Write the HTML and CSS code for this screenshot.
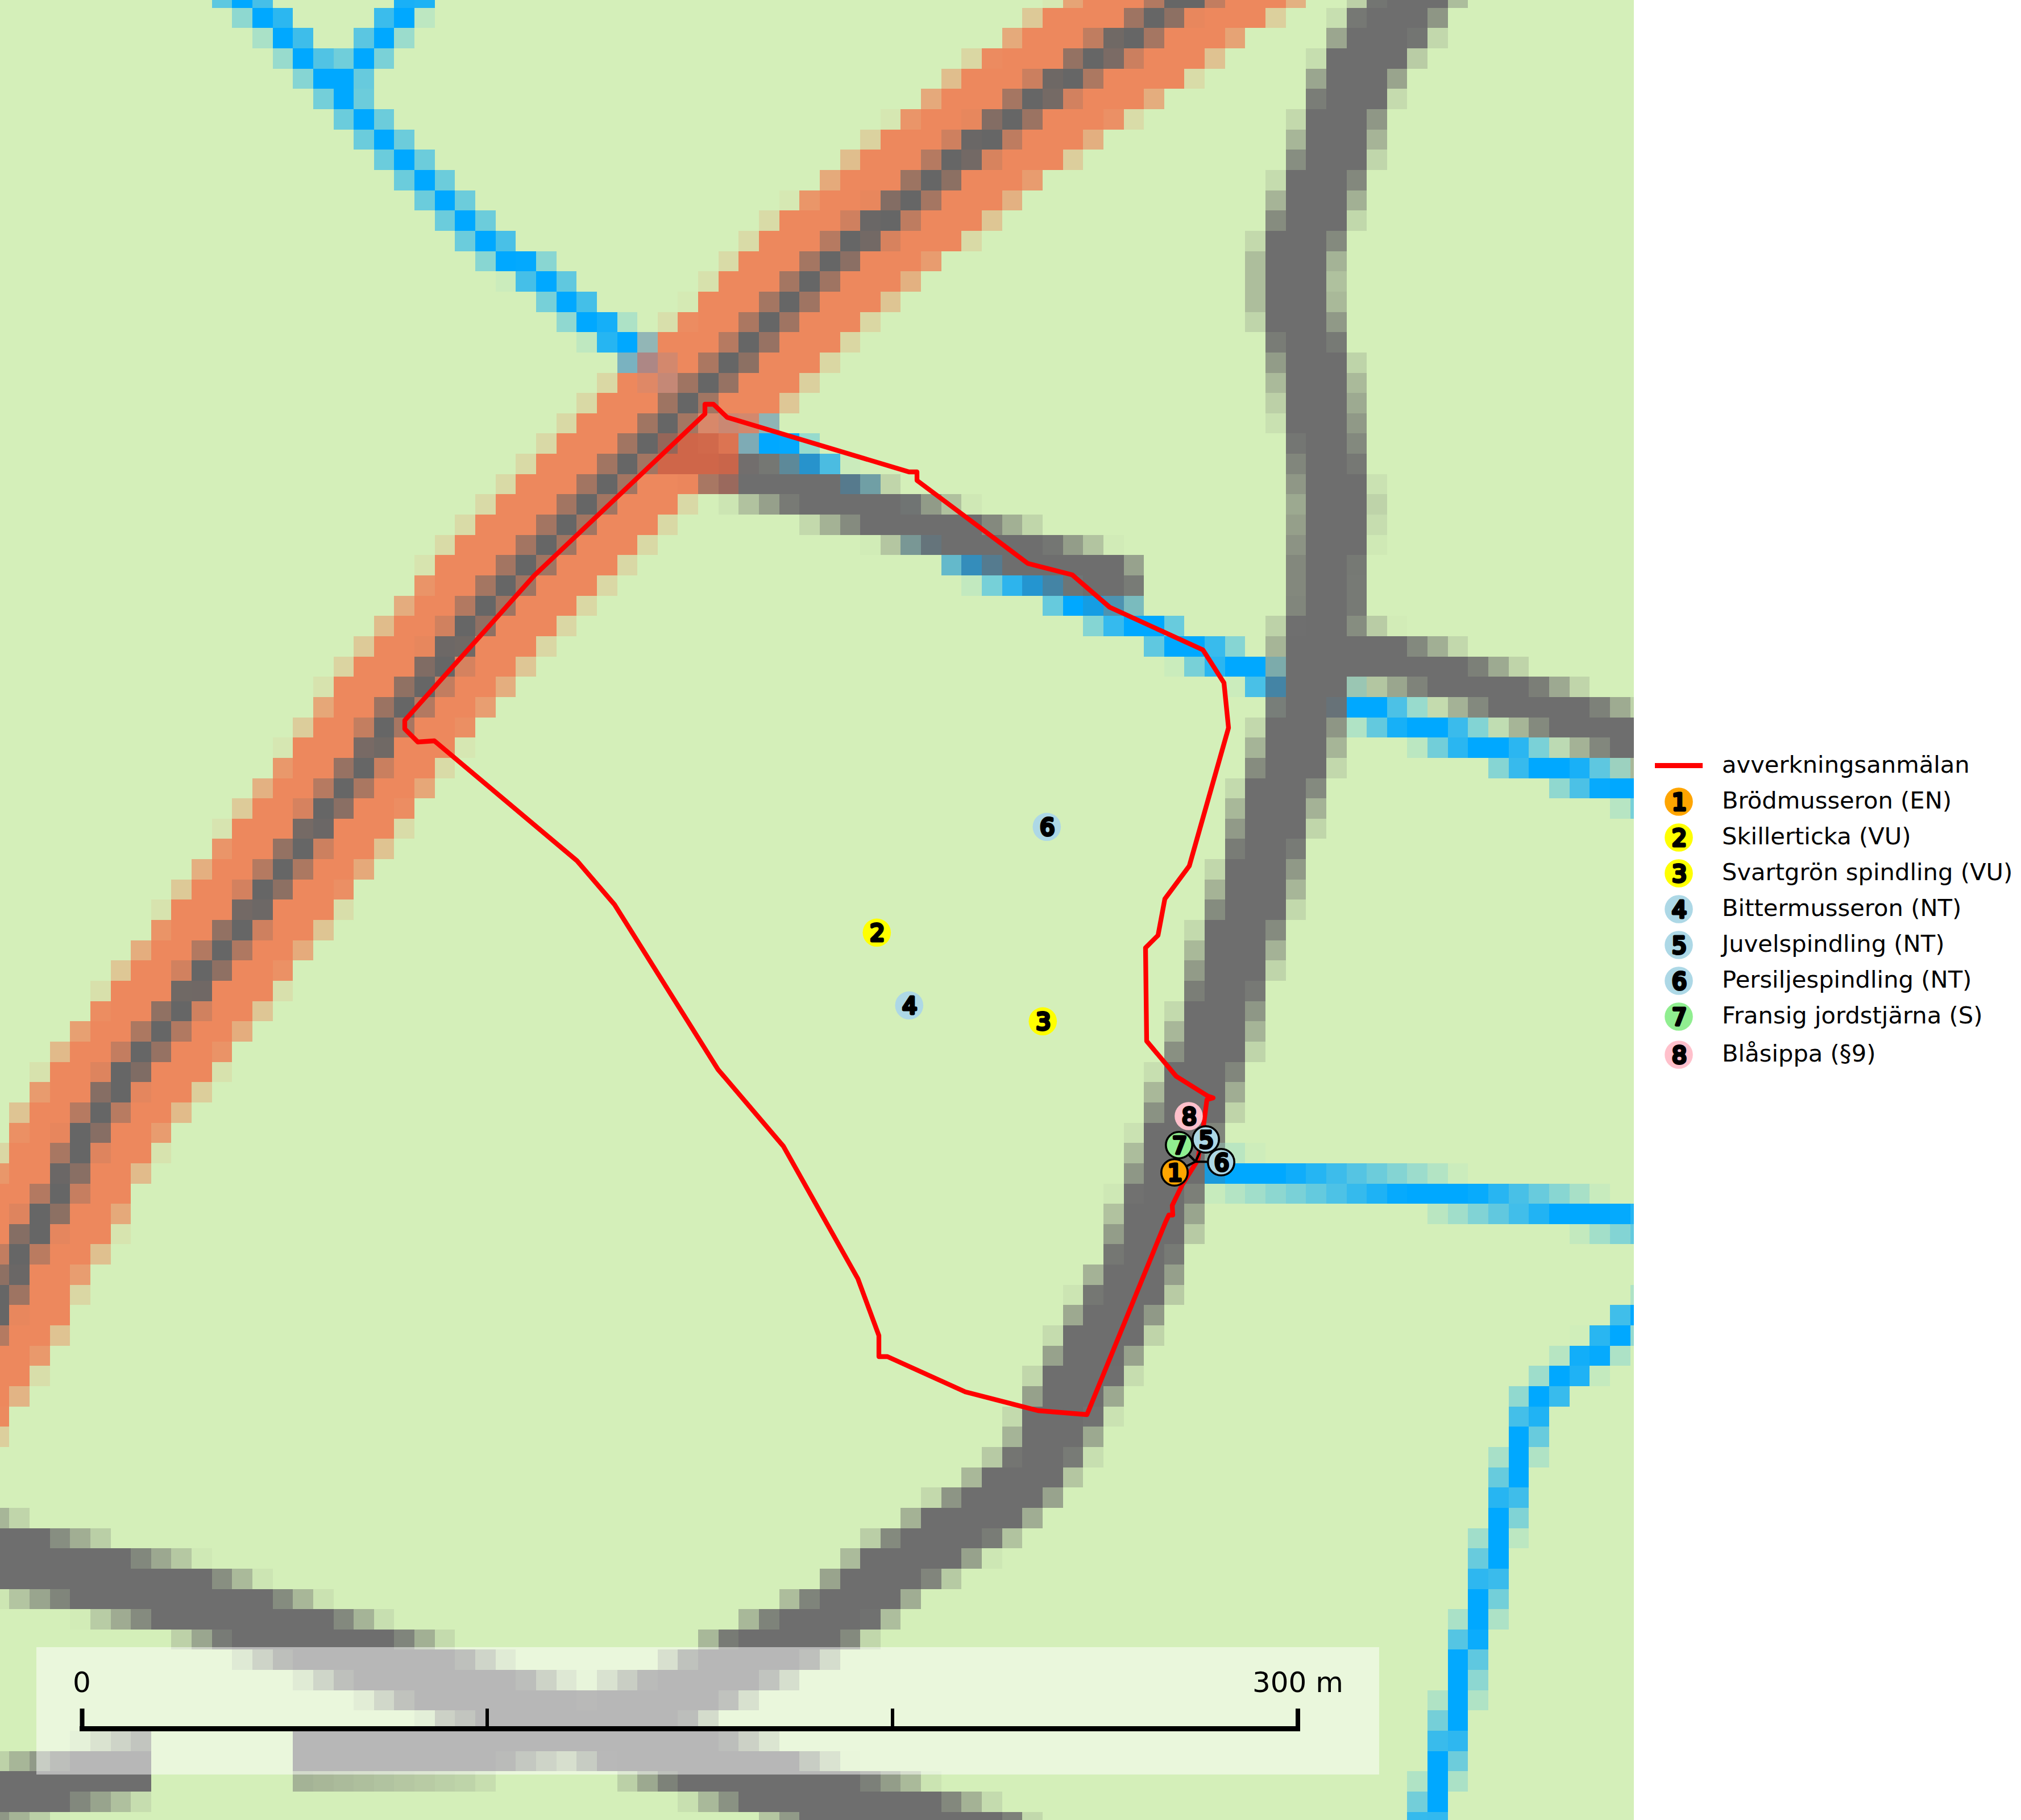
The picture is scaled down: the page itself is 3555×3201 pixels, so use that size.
FILE: index.html
```html
<!DOCTYPE html>
<html lang="sv">
<head>
<meta charset="utf-8">
<title>Avverkningsanmälan</title>
<link rel="stylesheet" href="styles.css">
</head>
<body>
<main class="figure">
  <svg class="map" width="2874" height="3201" viewBox="0 0 2874 3201" xmlns="http://www.w3.org/2000/svg">
    <rect class="ground" width="2874" height="3201"/>
    <g id="raster" shape-rendering="crispEdges"></g>
    <rect class="scale-box" x="64" y="2897" width="2362" height="224"/>
    <polygon class="boundary" points="1240,711 1255,711 1279,734 1599,830 1613,830 1613,845 1808,991 1886,1011 1952,1068 2116,1143 2153,1201 2161,1280 2092,1523 2049,1581 2037,1645 2015,1667 2017,1831 2069,1893 2125,1928 2134,1931 2123,1934 2117,1980 2107,2040 2080,2083 2062,2120 2063,2137 2056,2137 2050,2150 1912,2488 1826,2481 1698,2448 1561,2386 1546,2386 1546,2349 1509,2249 1378,2016 1263,1881 1081,1591 1015,1514 764,1303 735,1305 712,1282 712,1267 940,1012 1240,728"/>

    <path class="leader" d="M2103 2043L2074 2014M2103 2043L2121 2004M2103 2043L2148 2044M2103 2043L2066 2062"/>

    <g class="pin" transform="translate(1841.3 1454.3)"><circle class="fill-blue" r="24.8"/><text class="digit" x="1" y="15">6</text></g>
    <g class="pin" transform="translate(1542.3 1640.3)"><circle class="fill-yellow" r="24.8"/><text class="digit" x="1" y="15">2</text></g>
    <g class="pin" transform="translate(1599.3 1768.3)"><circle class="fill-blue" r="24.8"/><text class="digit" x="1" y="15">4</text></g>
    <g class="pin" transform="translate(1834.3 1796.3)"><circle class="fill-yellow" r="24.8"/><text class="digit" x="1" y="15">3</text></g>
    <g class="pin" transform="translate(2091 1963)"><circle class="fill-pink" r="24.8"/><text class="digit" x="1" y="15">8</text></g>
    <g class="pin" transform="translate(2074 2014)"><circle class="fill-green ring" r="23.2"/><text class="digit" x="1" y="15">7</text></g>
    <g class="pin" transform="translate(2121 2004)"><circle class="fill-blue ring" r="23.2"/><text class="digit" x="1" y="15">5</text></g>
    <g class="pin" transform="translate(2148 2044)"><circle class="fill-blue ring" r="23.2"/><text class="digit" x="1" y="15">6</text></g>
    <g class="pin" transform="translate(2066 2062)"><circle class="fill-orange ring" r="23.2"/><text class="digit" x="1" y="15">1</text></g>

    <g class="scale">
      <path class="scale-bar" d="M140 3040.5H2287"/>
      <path class="scale-tick" d="M144.5 3005V3045M2283 3005V3045"/>
      <path class="scale-tick-thin" d="M857 3005V3045M1570 3005V3045"/>
      <text class="scale-label" x="144" y="2976">0</text>
      <text class="scale-label" x="2283" y="2976">300 m</text>
    </g>
  </svg>

  <aside class="legend">
    <div class="legend-row">
      <span class="key"><span class="key-line"></span></span>
      <span class="label">avverkningsanmälan</span>
    </div>
    <div class="legend-row">
      <span class="key"><svg class="key-pin" viewBox="-25 -25 50 50"><circle class="fill-orange" r="24.8"/><text class="digit" x="1" y="15">1</text></svg></span>
      <span class="label">Brödmusseron (EN)</span>
    </div>
    <div class="legend-row">
      <span class="key"><svg class="key-pin" viewBox="-25 -25 50 50"><circle class="fill-yellow" r="24.8"/><text class="digit" x="1" y="15">2</text></svg></span>
      <span class="label">Skillerticka (VU)</span>
    </div>
    <div class="legend-row">
      <span class="key"><svg class="key-pin" viewBox="-25 -25 50 50"><circle class="fill-yellow" r="24.8"/><text class="digit" x="1" y="15">3</text></svg></span>
      <span class="label">Svartgrön spindling (VU)</span>
    </div>
    <div class="legend-row">
      <span class="key"><svg class="key-pin" viewBox="-25 -25 50 50"><circle class="fill-blue" r="24.8"/><text class="digit" x="1" y="15">4</text></svg></span>
      <span class="label">Bittermusseron (NT)</span>
    </div>
    <div class="legend-row">
      <span class="key"><svg class="key-pin" viewBox="-25 -25 50 50"><circle class="fill-blue" r="24.8"/><text class="digit" x="1" y="15">5</text></svg></span>
      <span class="label">Juvelspindling (NT)</span>
    </div>
    <div class="legend-row">
      <span class="key"><svg class="key-pin" viewBox="-25 -25 50 50"><circle class="fill-blue" r="24.8"/><text class="digit" x="1" y="15">6</text></svg></span>
      <span class="label">Persiljespindling (NT)</span>
    </div>
    <div class="legend-row">
      <span class="key"><svg class="key-pin" viewBox="-25 -25 50 50"><circle class="fill-green" r="24.8"/><text class="digit" x="1" y="15">7</text></svg></span>
      <span class="label">Fransig jordstjärna (S)</span>
    </div>
    <div class="legend-row legend-row-last">
      <span class="key"><svg class="key-pin" viewBox="-25 -25 50 50"><circle class="fill-pink" r="24.8"/><text class="digit" x="1" y="15">8</text></svg></span>
      <span class="label">Blåsippa (§9)</span>
    </div>
  </aside>
</main>
<script src="script.js"></script>
</body>
</html>
```

FILE: styles.css
```css
html, body {
  margin: 0;
  padding: 0;
  background: #fff;
}

.figure {
  display: flex;
  align-items: center;
  width: 3555px;
  height: 3201px;
  font-family: "DejaVu Sans", sans-serif;
  color: #000;
  overflow: hidden;
}

.map {
  display: block;
  flex: none;
}

.ground { fill: #d4efb9; }

.scale-box { fill: #fff; fill-opacity: .5; }

.boundary {
  fill: none;
  stroke: #f00;
  stroke-width: 8.3;
  stroke-linejoin: round;
}

.leader {
  fill: none;
  stroke: #000;
  stroke-width: 4.2;
}

.fill-blue { fill: #add8e6; }
.fill-yellow { fill: #ff0; }
.fill-pink { fill: #ffc0cb; }
.fill-green { fill: #90ee90; }
.fill-orange { fill: #ffa500; }

.ring {
  stroke: #000;
  stroke-width: 3.6;
}

.digit {
  font-family: "DejaVu Sans", sans-serif;
  font-weight: 400;
  font-size: 41px;
  text-anchor: middle;
  fill: #000;
  stroke: #000;
  stroke-width: 5;
  stroke-linejoin: round;
}

.scale-bar {
  fill: none;
  stroke: #000;
  stroke-width: 9;
}

.scale-tick {
  fill: none;
  stroke: #000;
  stroke-width: 8;
}

.scale-tick-thin {
  fill: none;
  stroke: #000;
  stroke-width: 6;
}

.scale-label {
  font-family: "DejaVu Sans", sans-serif;
  font-size: 50px;
  text-anchor: middle;
  fill: #000;
}

.legend {
  flex: none;
  display: flex;
  flex-direction: column;
  padding-left: 37px;
}

.legend-row {
  display: flex;
  align-items: center;
  gap: 34px;
  height: 63px;
  white-space: nowrap;
}

.legend-row-last {
  margin-top: 4px;
}

.key {
  flex: none;
  width: 84px;
  display: flex;
  justify-content: center;
  align-items: center;
}

.key-line {
  display: block;
  width: 84px;
  height: 8.4px;
  background: #f00;
}

.key-pin {
  display: block;
  width: 50px;
  height: 50px;
}

.label {
  font-size: 41.67px;
  line-height: 59px;
  height: 63px;
}
```

FILE: script.js
```js
// Builds the land-cover raster of the map: each line feature is rasterised
// onto a coarse grid with a soft edge, as the source raster has.
(function () {
  var CW = 35.64, CH = 35.65, X0 = 16.3 - CW, Y0 = 13.8 - CH;
  var W = 2874, H = 3201;

  var BLUE = [0, 168, 255], GREY = [110, 110, 110], ORANGE = [237, 136, 93];

  var ORANGE_LINE = [[2230, -110], [2075, 0], [2030, 31], [2000, 60], [1927, 102], [1768, 215], [1598, 351], [1451, 469],
    [1360, 560], [1290, 637], [1246, 673], [1210, 708], [1139, 780], [890, 1030], [855, 1065], [800, 1137],
    [740, 1208], [676, 1279], [660, 1315], [472, 1564], [282, 1816], [211, 1903], [141, 2012], [105, 2099],
    [33, 2206], [8, 2278], [-130, 2500]];

  var layers = [
    { color: BLUE, strokes: [
      { r: 10, R: 40, pts: [[395, -30], [475, 31], [604, 174], [854, 424], [905, 459], [962, 495], [1000, 531], [1156, 650]] },
      { r: 10, R: 40, pts: [[750, -30], [700, 31], [640, 103], [600, 145]] },
      { r: 10, R: 40, pts: [[1330, 760], [1370, 780], [1420, 816], [1720, 994], [1835, 1030], [1906, 1065], [2010, 1100],
        [2083, 1138], [2190, 1173], [2245, 1207], [2387, 1243], [2500, 1279], [2620, 1315], [2726, 1350], [2850, 1385], [2900, 1398]] },
      { r: 7, R: 40, pts: [[2100, 2058], [2300, 2075], [2560, 2102], [2900, 2150]] },
      { r: 10, R: 40, pts: [[2880, 2312], [2789, 2392], [2698, 2471], [2671, 2562], [2641, 2675], [2600, 2850], [2575, 2920],
        [2565, 2990], [2548, 3060], [2530, 3130], [2505, 3230]] }
    ] },
    { color: GREY, strokes: [
      { r: 48, R: 85, pts: [[2510, -50], [2459, 31], [2423, 67], [2405, 102], [2369, 174], [2352, 245], [2316, 352], [2279, 460],
        [2279, 531], [2298, 603], [2316, 674], [2335, 817], [2345, 888], [2335, 995], [2335, 1067], [2310, 1200], [2280, 1315],
        [2244, 1421], [2209, 1563], [2173, 1670], [2138, 1815], [2090, 1960], [2001, 2240], [1923, 2384], [1886, 2455], [1852, 2525]] },
      { r: 42, R: 78, pts: [[1852, 2525], [1816, 2590], [1760, 2640], [1700, 2680], [1564, 2766], [1530, 2795], [1460, 2848],
        [1389, 2884], [1310, 2920], [1190, 2985], [1050, 3030]] },
      { r: 33, R: 68, gap: [265, 516], cutTop: { from: 265, to: 780, y: 3045 },
        pts: [[-60, 3172], [200, 3115], [265, 3100], [516, 3082], [836, 3072], [1050, 3030]] },
      { r: 45, R: 78, pts: [[-60, 2722], [0, 2735], [336, 2815], [658, 2920], [1000, 3030], [1352, 3133], [1460, 3169], [1584, 3195], [1760, 3250]] },
      { r: 27, R: 60, pts: [[1250, 820], [1372, 851], [1495, 887], [1620, 922], [1744, 958], [1870, 994], [1965, 1022]] },
      { r: 28, R: 62, pts: [[2290, 1130], [2350, 1138], [2494, 1173], [2601, 1207], [2710, 1243], [2815, 1279], [2930, 1315]] }
    ] },
    { color: ORANGE, strokes: [{ r: 104, R: 132, pts: ORANGE_LINE }] },
    { color: [205, 100, 72], strokes: [{ r: 28, R: 48, opacity: .95, pts: [[1190, 800], [1270, 815]] }] },
    { color: [120, 135, 165], strokes: [
      { r: 6, R: 34, opacity: .55, pts: [[1130, 625], [1165, 660]] },
      { r: 6, R: 34, opacity: .3, pts: [[1260, 735], [1320, 760]] }
    ] },
    { color: [102, 102, 102], strokes: [{ r: 12, R: 42, pts: ORANGE_LINE }] }
  ];

  function segDist(px, py, a, b) {
    var dx = b[0] - a[0], dy = b[1] - a[1];
    var t = ((px - a[0]) * dx + (py - a[1]) * dy) / (dx * dx + dy * dy);
    t = Math.max(0, Math.min(1, t));
    var qx = a[0] + t * dx - px, qy = a[1] + t * dy - py;
    return Math.sqrt(qx * qx + qy * qy);
  }

  function strokeAlpha(s, cx, cy) {
    if (s.gap && cx > s.gap[0] && cx < s.gap[1]) return 0;
    if (s.cutTop && cx > s.cutTop.from && cx < s.cutTop.to && cy < s.cutTop.y) return 0;
    var d = Infinity;
    for (var i = 0; i + 1 < s.pts.length; i++) {
      d = Math.min(d, segDist(cx, cy, s.pts[i], s.pts[i + 1]));
      if (d <= s.r) break;
    }
    var a = (s.R - d) / (s.R - s.r);
    a = Math.max(0, Math.min(1, a));
    return a * (s.opacity === undefined ? 1 : s.opacity);
  }

  var NS = "http://www.w3.org/2000/svg";
  var frag = document.createDocumentFragment();
  var base = [212, 239, 185];

  for (var row = 0; Y0 + row * CH < H; row++) {
    var cy = Y0 + (row + .5) * CH;
    var y1 = Math.max(0, Math.round(Y0 + row * CH));
    var y2 = Math.min(H, Math.round(Y0 + (row + 1) * CH));
    for (var col = 0; X0 + col * CW < W; col++) {
      var cx = X0 + (col + .5) * CW;
      var c = base.slice(), touched = false;
      layers.forEach(function (layer) {
        var a = 0;
        layer.strokes.forEach(function (s) { a = Math.max(a, strokeAlpha(s, cx, cy)); });
        if (a > .02) {
          touched = true;
          for (var k = 0; k < 3; k++) c[k] = c[k] * (1 - a) + layer.color[k] * a;
        }
      });
      if (!touched) continue;
      var x1 = Math.max(0, Math.round(X0 + col * CW));
      var x2 = Math.min(W, Math.round(X0 + (col + 1) * CW));
      var rect = document.createElementNS(NS, "rect");
      rect.setAttribute("x", x1);
      rect.setAttribute("y", y1);
      rect.setAttribute("width", x2 - x1);
      rect.setAttribute("height", y2 - y1);
      rect.setAttribute("fill", "rgb(" + c.map(Math.round).join(",") + ")");
      frag.appendChild(rect);
    }
  }
  document.getElementById("raster").appendChild(frag);
})();
```
